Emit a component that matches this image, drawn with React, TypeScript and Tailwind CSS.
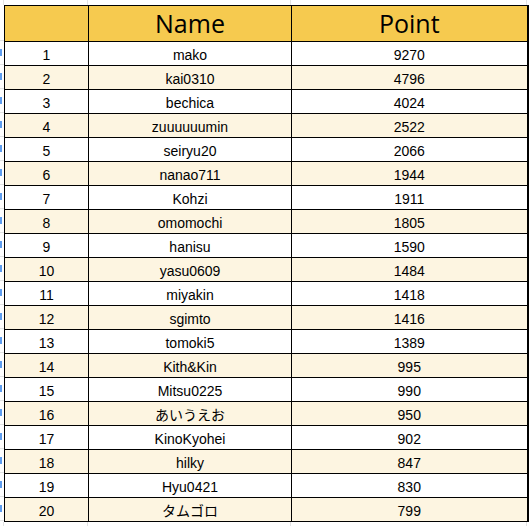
import React from "react";

const rows: [number, string, number][] = [
  [1, "mako", 9270],
  [2, "kai0310", 4796],
  [3, "bechica", 4024],
  [4, "zuuuuuumin", 2522],
  [5, "seiryu20", 2066],
  [6, "nanao711", 1944],
  [7, "Kohzi", 1911],
  [8, "omomochi", 1805],
  [9, "hanisu", 1590],
  [10, "yasu0609", 1484],
  [11, "miyakin", 1418],
  [12, "sgimto", 1416],
  [13, "tomoki5", 1389],
  [14, "Kith&Kin", 995],
  [15, "Mitsu0225", 990],
  [16, "あいうえお", 950],
  [17, "KinoKyohei", 902],
  [18, "hilky", 847],
  [19, "Hyu0421", 830],
  [20, "タムゴロ", 799],
];

const grid = "border-[#e2e3e3]";

export default function App() {
  return (
    <div className="w-[530px] h-[526px] overflow-hidden bg-white font-['Liberation_Sans','Noto_Sans_CJK_JP',sans-serif] text-[14px] text-black">
      {/* sheet gridlines above the table */}
      <div className="flex h-[5px]">
        <div className={`w-[4px] border-r ${grid}`} />
        <div className={`w-[84px] border-r ${grid}`} />
        <div className={`w-[203px] border-r ${grid}`} />
        <div className={`w-[236px] border-r ${grid}`} />
      </div>

      <div className="flex">
        {/* clipped neighbour column */}
        <div className="w-[4px] shrink-0">
          <div className={`h-[36px] border-b ${grid}`} />
          {rows.map(([rank]) => (
            <div key={rank} className={`h-[24px] border-b ${grid} flex items-center`}>
              <div className="w-[2px] h-[7px] bg-[#1a73e8]/70" />
            </div>
          ))}
        </div>

        <table className="border-collapse table-fixed border-l border-t border-r-2 border-black">
          <colgroup>
            <col className="w-[84px]" />
            <col className="w-[203px]" />
            <col className="w-[236px]" />
          </colgroup>
          <thead>
            <tr className="h-[36px] bg-[#f6ca4f] font-['Open_Sans',sans-serif] text-[25px] leading-none">
              <th className="border border-black font-normal" />
              <th className="border border-black font-normal">Name</th>
              <th className="border border-black font-normal">Point</th>
            </tr>
          </thead>
          <tbody>
            {rows.map(([rank, name, point]) => (
              <tr key={rank} className={`h-[24px] ${rank % 2 === 0 ? "bg-[#fdf5e1]" : "bg-white"}`}>
                <td className="border border-black text-center p-0 pt-[2px] leading-none">{rank}</td>
                <td className="border border-black text-center p-0 pt-[2px] leading-none">{name}</td>
                <td className="border border-black text-center p-0 pt-[2px] leading-none">{point}</td>
              </tr>
            ))}
          </tbody>
        </table>
      </div>

      <div className="flex h-[8px]">
        <div className={`w-[4px] border-r ${grid}`} />
        <div className={`w-[84px] border-r ${grid}`} />
        <div className={`w-[203px] border-r ${grid}`} />
        <div className={`w-[236px] border-r ${grid}`} />
      </div>
    </div>
  );
}
